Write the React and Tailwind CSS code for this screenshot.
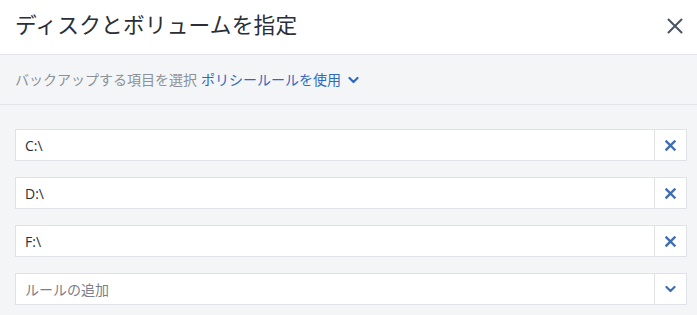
import React from "react";

const XSmall = () => (
  <svg width="11" height="11" viewBox="0 0 11 11" fill="none" stroke="#3d6db3" strokeWidth="2.4" strokeLinecap="square">
    <path d="M1.5 1.5 L9.5 9.5 M9.5 1.5 L1.5 9.5" />
  </svg>
);

const ChevronSmall = ({ color = "#3d6db3" }) => (
  <svg width="11" height="8" viewBox="0 0 11 8" fill="none" stroke={color} strokeWidth="2.2" strokeLinecap="round" strokeLinejoin="round">
    <path d="M1.5 2 L5.5 6 L9.5 2" />
  </svg>
);

const Row = ({ label, placeholder, icon }) => (
  <div className="flex h-[32px] border border-[#dfe2e6] bg-white">
    <div
      className={`flex flex-1 items-center pl-[9px] text-[14px] ${placeholder ? "text-[#7a8089]" : "text-[#2b2f36]"}`}
    >
      {label}
    </div>
    <div className="flex w-[32px] items-center justify-center border-l border-[#dfe2e6]">
      {icon === "x" ? <XSmall /> : <ChevronSmall />}
    </div>
  </div>
);

export default function App() {
  return (
    <div
      className="h-[315px] w-[697px] overflow-hidden bg-[#f4f5f7]"
      style={{ fontFamily: '"Open Sans", "Noto Sans CJK JP", sans-serif' }}
    >
      <div className="flex h-[55px] items-center justify-between border-b border-[#e2e5e9] bg-white pb-[3px] pl-[15px] pr-[12px]">
        <h1 className="text-[21.7px] font-normal tracking-[0.2px] text-[#2a2f37]">ディスクとボリュームを指定</h1>
        <svg width="20" height="20" viewBox="0 0 20 20" fill="none" stroke="#4a5461" strokeWidth="2" strokeLinecap="round">
          <path d="M3.5 3.5 L16.5 16.5 M16.5 3.5 L3.5 16.5" />
        </svg>
      </div>
      <div className="flex h-[50px] items-center border-b border-[#e2e5e9] pl-[15px] text-[14px]">
        <span className="text-[#8c9199]">バックアップする項目を選択</span>
        <span className="ml-[4px] text-[#2f6ac0]">ポリシールールを使用</span>
        <span className="ml-[7px] mt-[1px]">
          <ChevronSmall color="#2f6ac0" />
        </span>
      </div>
      <div className="flex flex-col gap-[16px] pl-[15px] pr-[10px] pt-[24px]">
        <Row label="C:\" icon="x" />
        <Row label="D:\" icon="x" />
        <Row label="F:\" icon="x" />
        <Row label="ルールの追加" placeholder icon="chevron" />
      </div>
    </div>
  );
}
